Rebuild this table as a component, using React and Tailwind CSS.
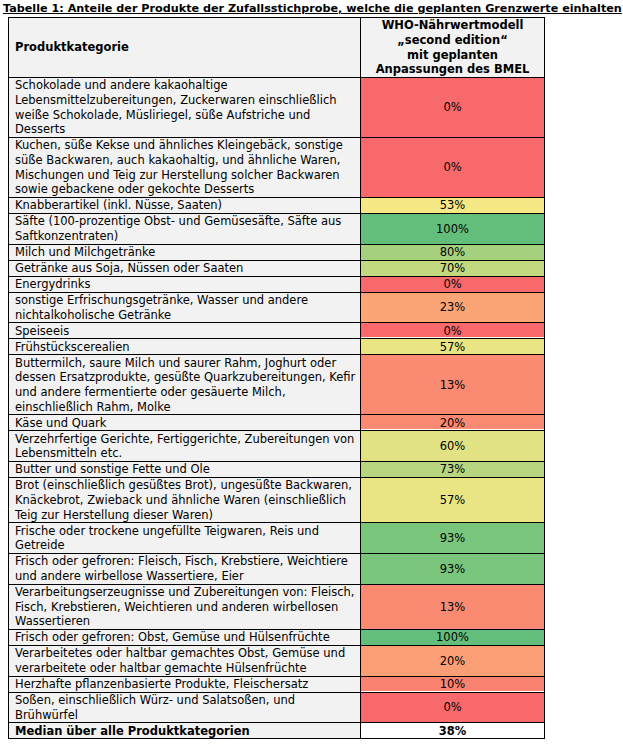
import React from "react";

const rows = [
  { l: ["Schokolade und andere kakaohaltige", "Lebensmittelzubereitungen, Zuckerwaren einschließlich", "weiße Schokolade, Müsliriegel, süße Aufstriche und", "Desserts"], v: "0%", c: "bg-[#f8696b]" },
  { l: ["Kuchen, süße Kekse und ähnliches Kleingebäck, sonstige", "süße Backwaren, auch kakaohaltig, und ähnliche Waren,", "Mischungen und Teig zur Herstellung solcher Backwaren", "sowie gebackene oder gekochte Desserts"], v: "0%", c: "bg-[#f8696b]" },
  { l: ["Knabberartikel (inkl. Nüsse, Saaten)"], v: "53%", c: "bg-[#f6e884]" },
  { l: ["Säfte (100-prozentige Obst- und Gemüsesäfte, Säfte aus", "Saftkonzentraten)"], v: "100%", c: "bg-[#63be7b]" },
  { l: ["Milch und Milchgetränke"], v: "80%", c: "bg-[#a5d17e]" },
  { l: ["Getränke aus Soja, Nüssen oder Saaten"], v: "70%", c: "bg-[#c2d980]" },
  { l: ["Energydrinks"], v: "0%", c: "bg-[#f8696b]" },
  { l: ["sonstige Erfrischungsgetränke, Wasser und andere", "nichtalkoholische Getränke"], v: "23%", c: "bg-[#fba577]" },
  { l: ["Speiseeis"], v: "0%", c: "bg-[#f8696b]", w: true },
  { l: ["Frühstückscerealien"], v: "57%", c: "bg-[#e9e583]" },
  { l: ["Buttermilch, saure Milch und saurer Rahm, Joghurt oder", "dessen Ersatzprodukte, gesüßte Quarkzubereitungen, Kefir", "und andere fermentierte oder gesäuerte Milch,", "einschließlich Rahm, Molke"], v: "13%", c: "bg-[#fa8a72]" },
  { l: ["Käse und Quark"], v: "20%", c: "bg-[#fa8b72]", w: true },
  { l: ["Verzehrfertige Gerichte, Fertiggerichte, Zubereitungen von", "Lebensmitteln etc."], v: "60%", c: "bg-[#e0e283]" },
  { l: ["Butter und sonstige Fette und Öle"], v: "73%", c: "bg-[#b8d680]" },
  { l: ["Brot (einschließlich gesüßtes Brot), ungesüßte Backwaren,", "Knäckebrot, Zwieback und ähnliche Waren (einschließlich", "Teig zur Herstellung dieser Waren)"], v: "57%", c: "bg-[#e9e583]" },
  { l: ["Frische oder trockene ungefüllte Teigwaren, Reis und", "Getreide"], v: "93%", c: "bg-[#7ac57c]" },
  { l: ["Frisch oder gefroren: Fleisch, Fisch, Krebstiere, Weichtiere", "und andere wirbellose Wassertiere, Eier"], v: "93%", c: "bg-[#7ac57c]" },
  { l: ["Verarbeitungserzeugnisse und Zubereitungen von: Fleisch,", "Fisch, Krebstieren, Weichtieren und anderen wirbellosen", "Wassertieren"], v: "13%", c: "bg-[#fa8a72]" },
  { l: ["Frisch oder gefroren: Obst, Gemüse und Hülsenfrüchte"], v: "100%", c: "bg-[#63be7b]" },
  { l: ["Verarbeitetes oder haltbar gemachtes Obst, Gemüse und", "verarbeitete oder haltbar gemachte Hülsenfrüchte"], v: "20%", c: "bg-[#fa9f75]" },
  { l: ["Herzhafte pflanzenbasierte Produkte, Fleischersatz"], v: "10%", c: "bg-[#f98370]", w: true },
  { l: ["Soßen, einschließlich Würz- und Salatsoßen, und", "Brühwürfel"], v: "0%", c: "bg-[#f8696b]" },
];

export default function App() {
  return (
    <div className="w-[623px] h-[746px] bg-white text-black font-['Verdana','DejaVu_Sans',sans-serif] text-[11.5px] leading-[14.67px]">
      <div className="pl-[3px] pt-[1px] font-bold underline whitespace-nowrap text-[11.2px] leading-[15px]">
        Tabelle 1: Anteile der Produkte der Zufallsstichprobe, welche die geplanten Grenzwerte einhalten
      </div>
      <table className="ml-[8px] mt-[1px] border-collapse table-fixed w-[536px]">
        <colgroup>
          <col className="w-[352px]" />
          <col className="w-[184px]" />
        </colgroup>
        <tbody>
          <tr>
            <td className="border border-black bg-[#f2f2f2] px-[6px] pt-[0.33px] font-bold align-middle">
              Produktkategorie
            </td>
            <td className="border border-black bg-[#f2f2f2] px-[4px] pt-[0.33px] font-bold text-center align-middle whitespace-nowrap">
              WHO-Nährwertmodell
              <br />
              „second edition“
              <br />
              mit geplanten
              <br />
              Anpassungen des BMEL
            </td>
          </tr>
          {rows.map((r, i) => (
            <tr key={i}>
              <td className="border border-black bg-[#f2f2f2] px-[6px] pt-[0.33px] align-top whitespace-nowrap">
                {r.l.map((t, j) => (
                  <div key={j}>{t}</div>
                ))}
              </td>
              <td
                className={`border border-black ${r.c} ${r.w ? "shadow-[inset_0_-1px_0_#ffffff]" : ""} pt-[0.33px] text-center align-middle`}
              >
                {r.v}
              </td>
            </tr>
          ))}
          <tr>
            <td className="border border-black bg-[#f2f2f2] px-[6px] pt-[0.33px] font-bold whitespace-nowrap">
              Median über alle Produktkategorien
            </td>
            <td className="border border-black bg-white pt-[0.33px] font-bold text-center">38%</td>
          </tr>
        </tbody>
      </table>
    </div>
  );
}
